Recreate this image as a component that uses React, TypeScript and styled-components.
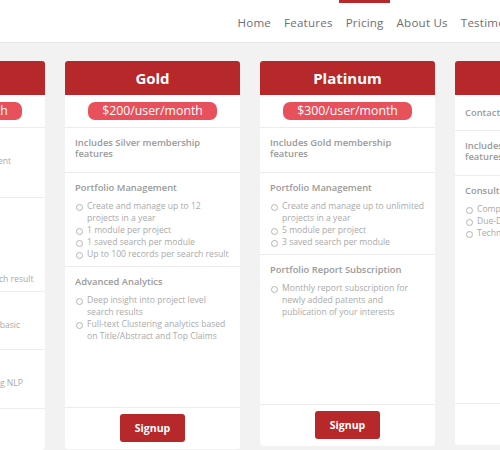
import React from "react";
import styled, { createGlobalStyle } from "styled-components";

const Global = createGlobalStyle`
  html, body { margin: 0; padding: 0; background: #f2f2f2; overflow: hidden; }
  body { font-family: "Open Sans", "Liberation Sans", sans-serif; }
  * { box-sizing: border-box; }
`;

const Header = styled.header`
  height: 43px;
  background: #fff;
  border-bottom: 1px solid #e8e8e8;
  display: flex;
  align-items: stretch;
  padding-left: 231px;
  overflow: hidden;
`;

const NavItem = styled.a<{ $active?: boolean }>`
  display: flex;
  align-items: center;
  padding: 0 6.5px;
  white-space: nowrap;
  font-size: 11.6px;
  letter-spacing: 0.2px;
  color: #6e6e78;
  border-top: 3px solid ${(p) => (p.$active ? "#b7282a" : "transparent")};
  text-decoration: none;
`;

const Row = styled.main`
  display: flex;
  justify-content: center;
  align-items: flex-start;
  gap: 20px;
  padding-top: 18px;
`;

const Card = styled.section`
  width: 175px;
  flex-shrink: 0;
  background: #fff;
  border-radius: 3px;
  display: flex;
  flex-direction: column;
`;

const CardTitle = styled.h2`
  margin: 0;
  height: 34px;
  background: #b7282a;
  color: #fff;
  font-size: 15px;
  font-weight: 700;
  display: flex;
  align-items: center;
  justify-content: center;
  border-radius: 3px 3px 0 0;
`;

const PriceRow = styled.div<{ $left?: boolean }>`
  padding: 7px 10px;
  border-bottom: 1px solid #ececec;
  display: flex;
  justify-content: ${(p) => (p.$left ? "flex-start" : "center")};
`;

const Pill = styled.span`
  background: #e8505c;
  color: #fff;
  border-radius: 7px;
  height: 18px;
  line-height: 18px;
  padding: 0 14px;
  font-size: 12.3px;
  white-space: nowrap;
`;

const Note = styled.span`
  line-height: 21px;
  font-size: 9.4px;
  font-weight: 600;
  color: #9c9c9c;
`;

const Body = styled.div<{ $min: number }>`
  min-height: ${(p) => p.$min}px;
`;

const Section = styled.div`
  padding: 9px 10px 6px;
  &:not(:last-child) {
    border-bottom: 1px solid #ececec;
  }
`;

const Heading = styled.h3`
  margin: 0 0 7px;
  font-size: 9.4px;
  line-height: 11px;
  font-weight: 600;
  color: #9a9a9a;
`;

const List = styled.ul`
  margin: 0;
  padding: 0;
  list-style: none;
`;

const Item = styled.li`
  display: flex;
  font-size: 8.6px;
  line-height: 12px;
  color: #aaaaaa;
  &::before {
    content: "";
    flex-shrink: 0;
    width: 5px;
    height: 5px;
    border: 1px solid #b5b5b5;
    border-radius: 50%;
    margin: 4px 4px 0 1px;
  }
`;

const Footer = styled.div`
  border-top: 1px solid #ececec;
  padding: 6px 0 7px;
  display: flex;
  justify-content: center;
`;

const Signup = styled.button`
  height: 28px;
  padding: 0 15px;
  border: none;
  border-radius: 3px;
  background: #b7282a;
  color: #fff;
  font-family: inherit;
  font-size: 10.5px;
  font-weight: 700;
`;

type Sec = { h: string; items?: string[] };
type Plan = {
  title: string;
  price?: string;
  note?: string;
  min: number;
  sections: Sec[];
};

const plans: Plan[] = [
  {
    title: "Silver",
    price: "$100/user/month",
    min: 280,
    sections: [
      { h: "Patent Search", items: ["Patent search & management", "1 project in a year", "1 module"] },
      {
        h: "Portfolio Management",
        items: [
          "Up to 3 projects in a year",
          "1 module per project",
          "1 saved search per module",
          "Basic patent analytics",
          "Up to 100 records per search result",
        ],
      },
      { h: "Basic Analytics", items: ["Clustering analytics on the basic", "bibliographic fields"] },
      { h: "Smart Search", items: ["Concept-based search using NLP"] },
    ],
  },
  {
    title: "Gold",
    price: "$200/user/month",
    min: 279,
    sections: [
      { h: "Includes Silver membership features" },
      {
        h: "Portfolio Management",
        items: [
          "Create and manage up to 12 projects in a year",
          "1 module per project",
          "1 saved search per module",
          "Up to 100 records per search result",
        ],
      },
      {
        h: "Advanced Analytics",
        items: [
          "Deep insight into project level search results",
          "Full-text Clustering analytics based on Title/Abstract and Top Claims",
        ],
      },
    ],
  },
  {
    title: "Platinum",
    price: "$300/user/month",
    min: 276,
    sections: [
      { h: "Includes Gold membership features" },
      {
        h: "Portfolio Management",
        items: [
          "Create and manage up to unlimited projects in a year",
          "5 module per project",
          "3 saved search per module",
        ],
      },
      {
        h: "Portfolio Report Subscription",
        items: ["Monthly report subscription for newly added patents and publication of your interests"],
      },
    ],
  },
  {
    title: "Enterprise",
    note: "Contact us",
    min: 272,
    sections: [
      { h: "Includes Platinum membership features" },
      {
        h: "Consulting Services",
        items: ["Competitive analysis", "Due-Diligence", "Technology landscaping"],
      },
    ],
  },
];

export default function App() {
  return (
    <>
      <Global />
      <Header>
        <NavItem>Home</NavItem>
        <NavItem>Features</NavItem>
        <NavItem $active>Pricing</NavItem>
        <NavItem>About Us</NavItem>
        <NavItem>Testimonials</NavItem>
      </Header>
      <Row>
        {plans.map((p) => (
          <Card key={p.title}>
            <CardTitle>{p.title}</CardTitle>
            <PriceRow $left={!p.price}>
              {p.price ? <Pill>{p.price}</Pill> : <Note>{p.note}</Note>}
            </PriceRow>
            <Body $min={p.min}>
              {p.sections.map((s) => (
                <Section key={s.h}>
                  <Heading>{s.h}</Heading>
                  {s.items && (
                    <List>
                      {s.items.map((it) => (
                        <Item key={it}>{it}</Item>
                      ))}
                    </List>
                  )}
                </Section>
              ))}
            </Body>
            <Footer>
              <Signup>Signup</Signup>
            </Footer>
          </Card>
        ))}
      </Row>
    </>
  );
}
